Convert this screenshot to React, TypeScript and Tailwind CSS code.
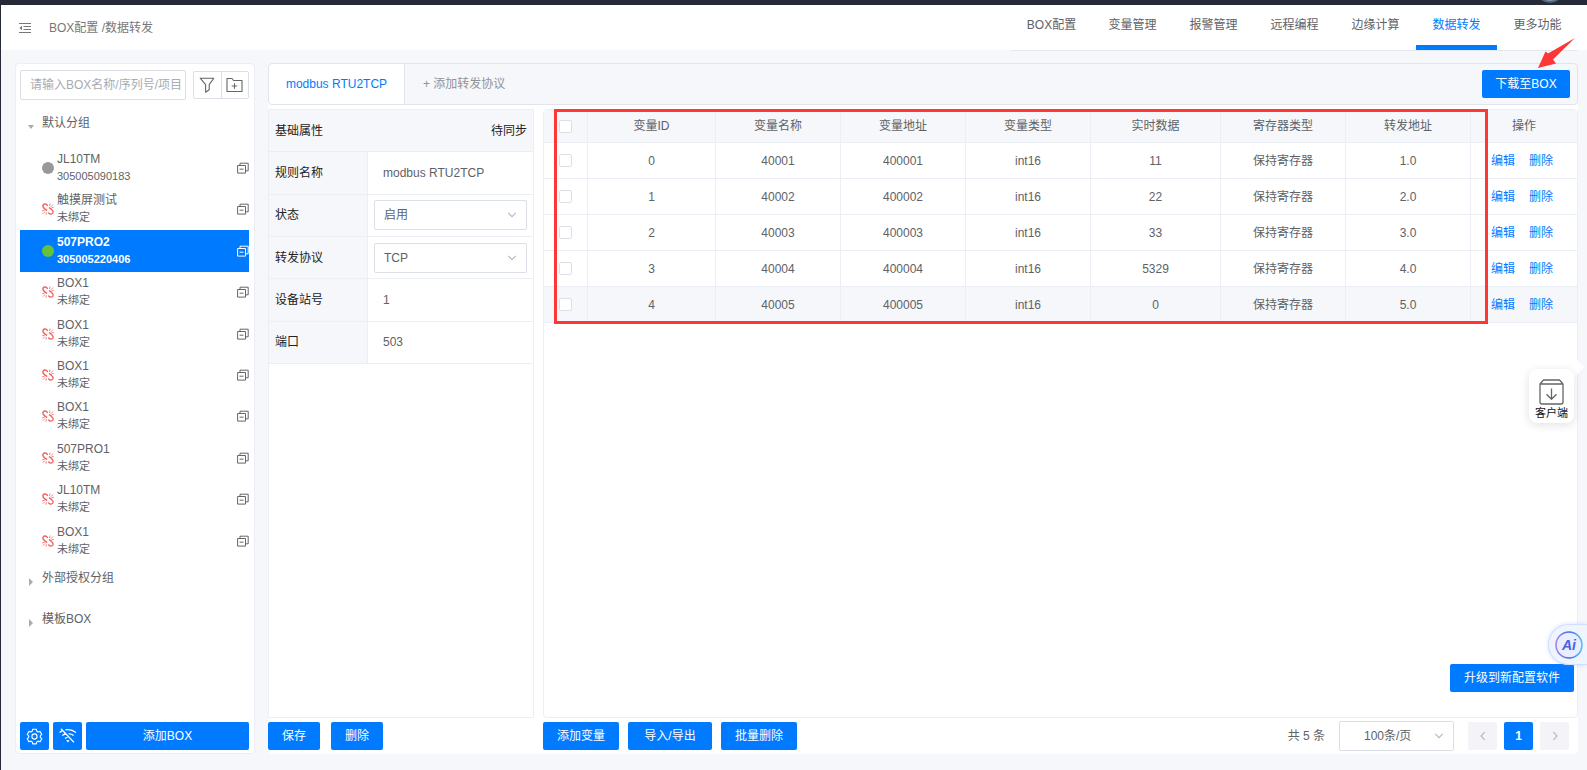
import { useState } from "react";
import type { ReactNode } from "react";

type DeviceStatus = "offline" | "online" | "unbound";

interface Device {
  id: string;
  name: string;
  detail: string;
  status: DeviceStatus;
}

interface Variable {
  id: number;
  name: string;
  address: string;
  type: string;
  value: string;
  register: string;
  forward: string;
}

const navItems = ["BOX配置", "变量管理", "报警管理", "远程编程", "边缘计算", "数据转发", "更多功能"];

const devices: Device[] = [
  { id: "d1", name: "JL10TM", detail: "305005090183", status: "offline" },
  { id: "d2", name: "触摸屏测试", detail: "未绑定", status: "unbound" },
  { id: "d3", name: "507PRO2", detail: "305005220406", status: "online" },
  { id: "d4", name: "BOX1", detail: "未绑定", status: "unbound" },
  { id: "d5", name: "BOX1", detail: "未绑定", status: "unbound" },
  { id: "d6", name: "BOX1", detail: "未绑定", status: "unbound" },
  { id: "d7", name: "BOX1", detail: "未绑定", status: "unbound" },
  { id: "d8", name: "507PRO1", detail: "未绑定", status: "unbound" },
  { id: "d9", name: "JL10TM", detail: "未绑定", status: "unbound" },
  { id: "d10", name: "BOX1", detail: "未绑定", status: "unbound" },
];

const variables: Variable[] = [
  { id: 0, name: "40001", address: "400001", type: "int16", value: "11", register: "保持寄存器", forward: "1.0" },
  { id: 1, name: "40002", address: "400002", type: "int16", value: "22", register: "保持寄存器", forward: "2.0" },
  { id: 2, name: "40003", address: "400003", type: "int16", value: "33", register: "保持寄存器", forward: "3.0" },
  { id: 3, name: "40004", address: "400004", type: "int16", value: "5329", register: "保持寄存器", forward: "4.0" },
  { id: 4, name: "40005", address: "400005", type: "int16", value: "0", register: "保持寄存器", forward: "5.0" },
];

const columns = [
  { label: "变量ID", width: "w-[128px]" },
  { label: "变量名称", width: "w-[125px]" },
  { label: "变量地址", width: "w-[125px]" },
  { label: "变量类型", width: "w-[125px]" },
  { label: "实时数据", width: "w-[130px]" },
  { label: "寄存器类型", width: "w-[125px]" },
  { label: "转发地址", width: "w-[125px]" },
];

const cell = "border-r border-b border-[#ebeef5] p-0 text-center font-normal";

function FoldIcon() {
  return (
    <svg width="12" height="12" viewBox="0 0 12 12" fill="none" stroke="#777" strokeWidth="1">
      <path d="M0 1.5h12M4.5 4.5H12M4.5 7.5H12M0 10.5h12" />
      <path d="M3 3.8v4.4L.4 6z" fill="#777" stroke="none" />
    </svg>
  );
}

function FilterIcon() {
  return (
    <svg width="16" height="16" viewBox="0 0 16 16" fill="none" stroke="#666" strokeWidth="1.1" strokeLinejoin="round">
      <path d="M1.2 1.2h13.6L10.2 7.6v5.2l-3.6 2.4V7.6z" />
    </svg>
  );
}

function FolderAddIcon() {
  return (
    <svg width="17" height="16" viewBox="0 0 17 16" fill="none" stroke="#666" strokeWidth="1.1" strokeLinejoin="round">
      <path d="M1 1.5h5l1.6 2H16v11H1zM8.5 6.2v5.6M5.7 9h5.6" />
    </svg>
  );
}

function CopyIcon({ active }: { active: boolean }) {
  return (
    <svg width="12" height="12" viewBox="0 0 12 12" fill="none" stroke={active ? "#fff" : "#666"} strokeWidth="1">
      <path d="M.6 3.5h7.9v7.6H.6zM3 3.2V1.2h8.2v7.6H8.8M2.6 7.2h3.900" />
    </svg>
  );
}

function UnboundIcon() {
  return (
    <svg width="12" height="12" viewBox="0 0 12 12" fill="none" stroke="#f26060" strokeLinecap="round">
      <path
        d="M5.400 2.400C4.300.6 2 .5 1.100 2.100.4 3.500 1.200 4.700 2.700 5.900M6.700 10C8 11.600 10 11.500 10.900 10 11.600 8.500 10.700 7.400 9.300 6.200M2.700 5.900 4.600 7.200M7.400 4.900 9.300 6.200"
        strokeWidth="1.400"
      />
      <path d="M7.600 2.600 8 .9M9.200 3.400 10.800 1.800M9.900 4.700 11.400 4.400M.6 7.700 2.200 7.400M1.200 10.400 2.800 8.800M4 11.300 4.400 9.700" strokeWidth=".8" />
    </svg>
  );
}

function GearIcon() {
  return (
    <svg width="17" height="17" viewBox="0 0 17 17" fill="none" stroke="#fff" strokeWidth="1.1" strokeLinejoin="round">
      <path d="M6.7 1.2h3.6l.5 2 1.3.8 2-.6 1.7 3-1.5 1.4v1.5l1.5 1.4-1.7 3-2-.6-1.3.8-.5 2H6.7l-.5-2-1.3-.8-2 .6-1.7-3 1.5-1.4V7.8L1.2 6.4l1.7-3 2 .6 1.3-.8z" />
      <circle cx="8.5" cy="8.5" r="2.6" />
    </svg>
  );
}

function WifiOffIcon() {
  return (
    <svg width="18" height="16" viewBox="0 0 18 16" fill="none" stroke="#fff" strokeWidth="1.3">
      <path d="M2 .8 15 14.4M.6 4.6C1.6 3.8 2.4 3.2 3.600 2.700M6.4 1.9c3.8-.6 7.600.3 10.600 2.700M3.300 7.600c.9-.8 1.9-1.300 3-1.600M9.600 5.600c1.900.2 3.600.8 5 2M6 10.400c.8-.7 1.700-1 2.700-1.100" />
      <path d="M7.200 12.600c1-.9 2.300-.9 3.300 0L9 14.600z" fill="#fff" stroke="none" />
    </svg>
  );
}

function Chevron({ direction }: { direction: "down" | "left" | "right" }) {
  const paths = {
    down: "M1.5 3.5 6 8l4.5-4.5",
    left: "M8 1.5 3.5 6 8 10.5",
    right: "M4 1.5 8.5 6 4 10.5",
  };

  return (
    <svg width="10" height="10" viewBox="0 0 12 12" fill="none" stroke="#b4b8bf" strokeWidth="1.3">
      <path d={paths[direction]} />
    </svg>
  );
}

function PrimaryButton({
  children,
  label,
  className = "px-3.5",
}: {
  children: ReactNode;
  label?: string;
  className?: string;
}) {
  return (
    <button
      type="button"
      aria-label={label}
      className={`flex h-7 items-center justify-center rounded-xs bg-[#007bff] whitespace-nowrap text-white ${className}`}
    >
      {children}
    </button>
  );
}

function Checkbox({ label }: { label: string }) {
  return (
    <input
      type="checkbox"
      aria-label={label}
      className="mx-auto block size-[13px] appearance-none rounded-xs border border-[#dcdfe6] bg-white checked:bg-[#007bff]"
    />
  );
}

function TreeGroup({ label, open }: { label: string; open?: boolean }) {
  return (
    <button type="button" className="flex items-center pl-2 text-left">
      <svg width="6" height="8" viewBox="0 0 6 8" fill="#a8abb2">
        <path d={open ? "M0 2h6L3 6z" : "M1 0v8l4-4z"} />
      </svg>
      <span className="pb-2 pl-2">{label}</span>
    </button>
  );
}

function TreeItem({ device, active, onSelect }: { device: Device; active: boolean; onSelect: () => void }) {
  return (
    <button
      type="button"
      onClick={onSelect}
      className={`flex items-center pl-[22px] text-left ${active ? "bg-[#007bff] font-bold text-white" : ""}`}
    >
      {device.status === "unbound" ? (
        <UnboundIcon />
      ) : (
        <span className={`size-3 rounded-full ${device.status === "online" ? "bg-[#67c23a]" : "bg-[#999]"}`} />
      )}
      <span className="flex flex-1 flex-col pl-[3px] leading-[17px]">
        <span>{device.name}</span>
        <span className="text-[11px]">{device.detail}</span>
      </span>
      <CopyIcon active={active} />
    </button>
  );
}

function Sidebar() {
  const [selected, setSelected] = useState("d3");

  return (
    <aside className="flex w-[240px] shrink-0 flex-col rounded-sm border border-[#ebeef5] bg-white pt-1.5 pr-[5px] pb-[3px] pl-1">
      <div className="flex items-center gap-[7px]">
        <input
          type="text"
          aria-label="搜索BOX"
          placeholder="请输入BOX名称/序列号/项目"
          className="h-[30px] min-w-0 flex-1 rounded-xs border border-[#dcdfe6] pl-[9px] placeholder:text-[#a8abb2]"
        />
        <div className="flex h-7 w-14 shrink-0 rounded-xs border border-[#dcdfe6]">
          <button type="button" aria-label="筛选" className="flex flex-1 items-center justify-center border-r border-[#dcdfe6]">
            <FilterIcon />
          </button>
          <button type="button" aria-label="新建分组" className="flex flex-1 items-center justify-center">
            <FolderAddIcon />
          </button>
        </div>
      </div>

      <div className="mt-1.5 grid h-[538px] auto-rows-fr">
        <TreeGroup label="默认分组" open />
        {devices.map((device) => (
          <TreeItem
            key={device.id}
            device={device}
            active={device.id === selected}
            onSelect={() => setSelected(device.id)}
          />
        ))}
        <TreeGroup label="外部授权分组" />
        <TreeGroup label="模板BOX" />
      </div>

      <div className="mt-auto flex gap-1">
        <PrimaryButton label="设置" className="w-[29px]">
          <GearIcon />
        </PrimaryButton>
        <PrimaryButton label="离线" className="w-[29px]">
          <WifiOffIcon />
        </PrimaryButton>
        <PrimaryButton className="flex-1">添加BOX</PrimaryButton>
      </div>
    </aside>
  );
}

function Field({ id, label, children }: { id: string; label: string; children: ReactNode }) {
  return (
    <div className="flex border-b border-[#ebeef5]">
      <label
        htmlFor={id}
        className="flex w-[99px] shrink-0 items-center border-r border-[#ebeef5] bg-[#f5f7fa] pl-1.5 text-[#222]"
      >
        {label}
      </label>
      <div className="flex min-w-0 flex-1 items-center px-1.5">{children}</div>
    </div>
  );
}

function TextField({ id, label, value }: { id: string; label: string; value: string }) {
  return (
    <Field id={id} label={label}>
      <input id={id} type="text" defaultValue={value} className="h-[30px] w-full min-w-0 pl-[9px]" />
    </Field>
  );
}

function SelectField({ id, label, options }: { id: string; label: string; options: string[] }) {
  return (
    <Field id={id} label={label}>
      <div className="relative w-full">
        <select id={id} className="h-[30px] w-full appearance-none rounded-xs border border-[#dcdfe6] bg-white pl-[9px]">
          {options.map((option) => (
            <option key={option}>{option}</option>
          ))}
        </select>
        <span className="pointer-events-none absolute inset-y-0 right-2.5 flex items-center">
          <Chevron direction="down" />
        </span>
      </div>
    </Field>
  );
}

function PropertyPanel() {
  return (
    <section className="w-[266px] shrink-0 border border-[#ebeef5]">
      <div className="grid h-[254px] auto-rows-fr">
        <div className="flex items-center justify-between border-b border-[#ebeef5] bg-[#f5f7fa] px-1.5 text-[#222]">
          <h2>基础属性</h2>
          <span>待同步</span>
        </div>
        <TextField id="rule-name" label="规则名称" value="modbus RTU2TCP" />
        <SelectField id="state" label="状态" options={["启用", "禁用"]} />
        <SelectField id="protocol" label="转发协议" options={["TCP", "RTU"]} />
        <TextField id="station" label="设备站号" value="1" />
        <TextField id="port" label="端口" value="503" />
      </div>
    </section>
  );
}

function VariableTable() {
  return (
    <section className="min-w-0 flex-1 rounded-sm border border-[#ebeef5]">
      <div className="relative">
        <table className="w-full table-fixed border-separate border-spacing-0">
          <thead>
            <tr className="h-[33px] bg-[#f5f7fa]">
              <th className={`w-11 ${cell}`}>
                <Checkbox label="全选" />
              </th>
              {columns.map((column) => (
                <th key={column.label} className={`${cell} ${column.width}`}>
                  {column.label}
                </th>
              ))}
              <th className="w-[106px] border-b border-[#ebeef5] p-0 text-center font-normal">操作</th>
            </tr>
          </thead>
          <tbody>
            {variables.map((variable) => (
              <tr key={variable.id} className="h-9 last:bg-[#f5f7fa]">
                <td className={cell}>
                  <Checkbox label={`选择 ${variable.name}`} />
                </td>
                <td className={cell}>{variable.id}</td>
                <td className={cell}>{variable.name}</td>
                <td className={cell}>{variable.address}</td>
                <td className={cell}>{variable.type}</td>
                <td className={cell}>{variable.value}</td>
                <td className={cell}>{variable.register}</td>
                <td className={cell}>{variable.forward}</td>
                <td className="border-b border-[#ebeef5] p-0 pl-5 text-[#007bff]">
                  <div className="flex gap-3.5">
                    <a href="#edit">编辑</a>
                    <a href="#delete">删除</a>
                  </div>
                </td>
              </tr>
            ))}
          </tbody>
        </table>
        <div className="pointer-events-none absolute -top-px right-[89px] -bottom-px left-2.5 border-3 border-[#ff3636]" />
      </div>
    </section>
  );
}

function Pagination() {
  return (
    <div className="ml-auto flex items-center gap-[7px] pr-[9px]">
      <span className="pr-[7px]">共 5 条</span>
      <div className="relative mr-[7px]">
        <select
          aria-label="每页条数"
          className="h-[30px] w-[115px] appearance-none rounded-xs border border-[#dcdfe6] bg-white pl-6"
        >
          <option>100条/页</option>
          <option>50条/页</option>
        </select>
        <span className="pointer-events-none absolute inset-y-0 right-2.5 flex items-center">
          <Chevron direction="down" />
        </span>
      </div>
      <button type="button" aria-label="上一页" className="flex h-7 w-[29px] items-center justify-center rounded-xs bg-[#f4f4f8]">
        <Chevron direction="left" />
      </button>
      <PrimaryButton className="w-[29px] font-bold">1</PrimaryButton>
      <button type="button" aria-label="下一页" className="flex h-7 w-[29px] items-center justify-center rounded-xs bg-[#f4f4f8]">
        <Chevron direction="right" />
      </button>
    </div>
  );
}

function Header() {
  return (
    <header className="flex h-[45px] shrink-0 justify-between bg-white pr-[9px] pl-[18px]">
      <div className="flex items-center gap-[18px] text-[#777]">
        <button type="button" aria-label="收起菜单">
          <FoldIcon />
        </button>
        <span>BOX配置 /数据转发</span>
      </div>
      <nav className="flex h-[46px] border-b border-[#e4e7ed]">
        {navItems.map((item) => (
          <a
            key={item}
            href="#nav"
            className={`flex h-[45px] w-[81px] items-center justify-center border-b-5 ${
              item === "数据转发" ? "border-[#007bff] text-[#007bff]" : "border-transparent"
            }`}
          >
            {item}
          </a>
        ))}
      </nav>
    </header>
  );
}

function FloatingTools() {
  return (
    <>
      <button
        type="button"
        className="absolute top-[369px] right-[13px] flex h-[54px] w-[45px] flex-col items-center rounded-lg bg-white pt-2.5 text-[11px] leading-[17px] text-[#111] shadow-[0_2px_10px_rgba(0,0,0,0.12)]"
      >
        <svg width="25" height="26" viewBox="0 0 25 26" className="shrink-0" fill="none" stroke="#666" strokeWidth="1.3" strokeLinejoin="round">
          <path d="M1 5v18a2 2 0 0 0 2 2h19a2 2 0 0 0 2-2V5zM1 5l3.500-4h16L24 5M12.500 9.500v10.500M7.500 15.300l5 5 5-5" />
        </svg>
        客户端
      </button>
      <svg width="8" height="14" viewBox="0 0 8 14" fill="#fff" className="absolute top-[360px] right-0.5">
        <path d="M0 0v14l8-7z" />
      </svg>
      <PrimaryButton className="absolute top-[664px] right-[13px] px-3.5">升级到新配置软件</PrimaryButton>
      <button
        type="button"
        aria-label="AI助手"
        className="absolute top-[624px] right-0 flex h-[41px] w-[39px] items-center rounded-l-full border border-r-0 border-[#cfdffc] bg-[#eff5ff] pl-1.5 shadow-[0_0_4px_rgba(110,150,250,0.3)]"
      >
        <svg width="28" height="28" viewBox="0 0 28 28" className="shrink-0">
          <defs>
            <linearGradient id="ai-ring" x1="0" y1="0" x2="1" y2="0">
              <stop offset="0" stopColor="#a286ee" />
              <stop offset=".5" stopColor="#4c6be6" />
              <stop offset="1" stopColor="#55bff0" />
            </linearGradient>
          </defs>
          <circle cx="14" cy="14" r="13" fill="#e9eefe" stroke="url(#ai-ring)" strokeWidth="1.6" />
          <text x="14" y="19" textAnchor="middle" fontSize="14" fontWeight="bold" fontStyle="italic" fill="#4b63e0">
            Ai
          </text>
        </svg>
      </button>
      <svg width="40" height="32" viewBox="0 0 40 32" fill="#ff3636" className="pointer-events-none absolute top-[37px] right-[10px]">
        <path d="M1 31 8.500 14.500 11 16.500 38 1 16 22.500 19 26.500z" />
      </svg>
    </>
  );
}

export default function App() {
  return (
    <div className="relative flex min-h-screen flex-col overflow-hidden border-l border-[#252b36] bg-[#f5f7fa] font-['Liberation_Sans','Noto_Sans_CJK_SC',sans-serif] text-xs text-[#606266]">
      <div className="relative h-[5px] shrink-0 overflow-hidden bg-[#252b36]">
        <span className="absolute right-[23px] bottom-0.5 size-7 rounded-full border-2 border-[#4d6580] bg-[#8b95a3]" />
      </div>
      <Header />

      <main className="flex flex-1 gap-[13px] pt-[13px] pr-[9px] pb-4 pl-3.5">
        <Sidebar />
        <div className="flex min-w-0 flex-1 flex-col rounded-sm bg-white">
          <div className="flex h-[42px] items-center rounded-sm border border-[#dfe4ed] bg-[#f5f7fa]">
            <button
              type="button"
              className="h-full w-[136px] rounded-l-sm border-r border-[#dfe4ed] bg-white text-[#007bff]"
            >
              modbus RTU2TCP
            </button>
            <button type="button" className="pl-[18px] text-[#909399]">
              + 添加转发协议
            </button>
            <PrimaryButton className="mr-[7px] ml-auto w-[88px]">下载至BOX</PrimaryButton>
          </div>

          <div className="mt-1 flex flex-1 gap-[9px]">
            <PropertyPanel />
            <VariableTable />
          </div>

          <div className="flex h-9 items-center">
            <div className="flex w-[275px] gap-[11px]">
              <PrimaryButton>保存</PrimaryButton>
              <PrimaryButton>删除</PrimaryButton>
            </div>
            <div className="flex gap-[9px]">
              <PrimaryButton>添加变量</PrimaryButton>
              <PrimaryButton className="w-[84px]">导入/导出</PrimaryButton>
              <PrimaryButton>批量删除</PrimaryButton>
            </div>
            <Pagination />
          </div>
        </div>
      </main>

      <div className="absolute top-[257px] -left-px h-9 w-px bg-[#007bff]" />
      <FloatingTools />
    </div>
  );
}
